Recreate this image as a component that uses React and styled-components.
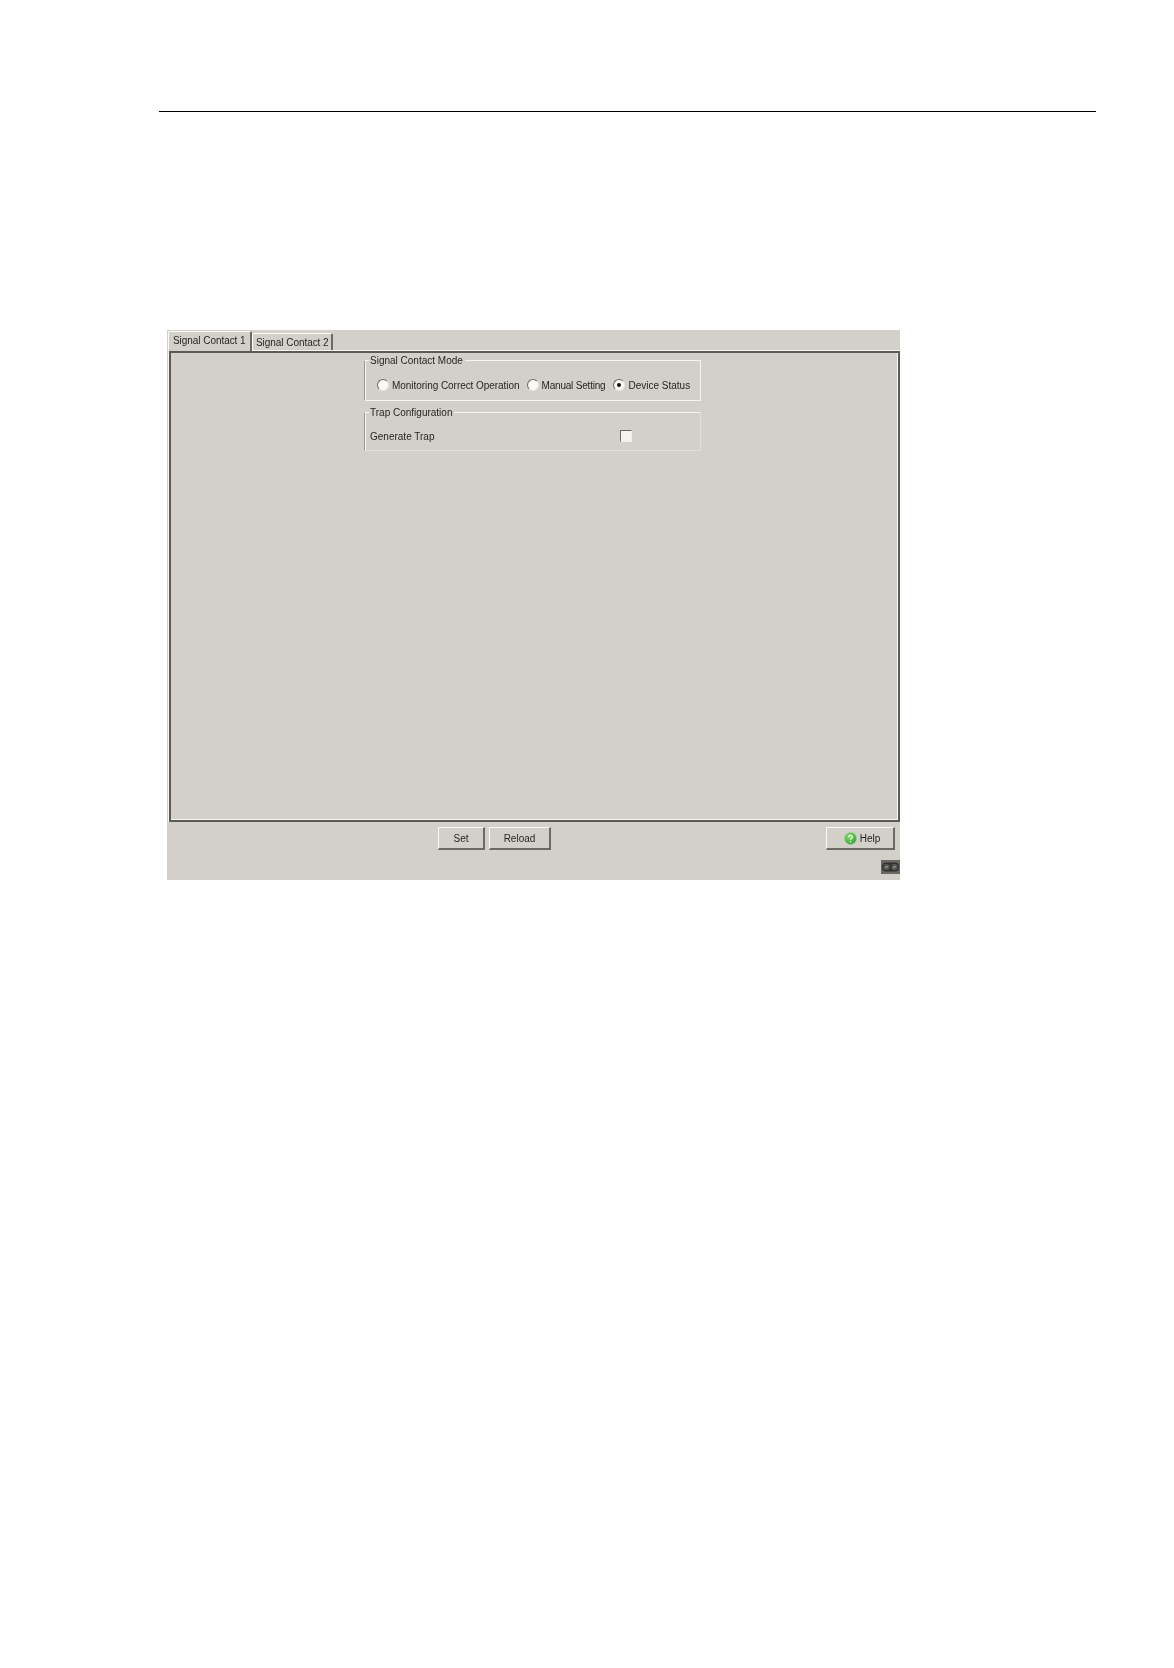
import React from "react";
import styled, { createGlobalStyle } from "styled-components";

const Global = createGlobalStyle`
  html, body { margin: 0; padding: 0; background: #fff; }
  body { font-family: "Liberation Sans", Arial, sans-serif; }
`;

const Page = styled.div`
  width: 1174px;
  height: 1668px;
  padding-top: 111px;
  box-sizing: border-box;
  overflow: hidden;
`;

const Rule = styled.div`
  height: 1px;
  margin: 0 78px 0 159px;
  background: #000;
`;

const Window = styled.div`
  margin: 218px 0 0 167px;
  width: 733px;
  height: 550px;
  background: #d3d0c9;
  display: flex;
  flex-direction: column;
  color: #262626;
  font-size: 10px;
  filter: blur(0.25px);
`;

const TabBar = styled.div`
  display: flex;
  align-items: flex-end;
  height: 21px;
  padding-left: 1px;
  flex: none;
`;

const Tab = styled.div`
  box-sizing: border-box;
  position: relative;
  z-index: 1;
  height: ${p => (p.$active ? 20 : 17)}px;
  width: ${p => (p.$active ? 84 : 81)}px;
  padding: 2px 0 0 ${p => (p.$active ? 4 : 3)}px;
  margin-bottom: ${p => (p.$active ? 0 : 1)}px;
  line-height: 13px;
  letter-spacing: -0.05px;
  white-space: nowrap;
  background: #d3d0c9;
  border-top: 1px solid #fbfbf8;
  border-left: 1px solid #fbfbf8;
  border-right: 2px solid #6b6963;
  border-radius: 2px 2px 0 0;
`;

const Frame = styled.div`
  flex: 1;
  margin: 0 0 0 2px;
  box-sizing: border-box;
  border: 2px solid #5b5a55;
  box-shadow: inset -1px -1px 0 #f7f7f3, -1px 0 0 #f7f7f3, 0 -1px 0 #f7f7f3;
  padding: 1px 0 0 193px;
  display: flex;
  flex-direction: column;
  gap: 5px;
`;

const Group = styled.fieldset`
  margin: 0;
  padding: 0;
  width: 337px;
  height: ${p => p.$h}px;
  box-sizing: border-box;
  border: 1px solid ${p => (p.$faint ? "#e2e0da" : "#f5f4f0")};
  border-top-color: #f5f4f0;
  border-left-color: #9a9892;
  border-radius: 2px 0 0 0;
  box-shadow: inset 1px 0 0 #f5f4f0;
`;

const Legend = styled.legend`
  padding: 0 2px 0 1px;
  margin-left: 4px;
  line-height: 13px;
  white-space: nowrap;
`;

const Radios = styled.div`
  display: flex;
  align-items: center;
  padding: 12px 0 0 12px;
`;

const RadioItem = styled.label`
  display: flex;
  align-items: center;
  gap: 3px;
  margin-right: ${p => p.$gap}px;
  white-space: nowrap;
`;

const RadioDot = styled.span`
  box-sizing: border-box;
  width: 12px;
  height: 12px;
  border-radius: 50%;
  background: #f8f8f4;
  border: 1px solid;
  border-color: #6a6862 #e8e6e0 #e8e6e0 #6a6862;
  display: flex;
  align-items: center;
  justify-content: center;
  flex: none;

  &::after {
    content: "";
    width: 4px;
    height: 4px;
    border-radius: 50%;
    background: ${p => (p.$on ? "#111" : "transparent")};
  }
`;

const RadioText = styled.span`
  letter-spacing: ${p => p.$track}px;
`;

const TrapRow = styled.div`
  display: flex;
  align-items: center;
  padding: 11px 0 0 5px;
`;

const TrapLabel = styled.span`
  width: 250px;
`;

const CheckBox = styled.span`
  box-sizing: border-box;
  width: 12px;
  height: 12px;
  background: #f5f4ef;
  border: 1px solid;
  border-color: #6a6862 #eeede8 #eeede8 #6a6862;
`;

const Footer = styled.div`
  flex: none;
  height: 58px;
  display: flex;
  flex-direction: column;
`;

const ButtonRow = styled.div`
  display: flex;
  gap: 4px;
  padding: 5px 5px 0 271px;
`;

const Button = styled.button`
  box-sizing: border-box;
  width: ${p => p.$w}px;
  height: 23px;
  margin-left: ${p => (p.$push ? "auto" : 0)};
  padding: 0 0 0 ${p => (p.$push ? 4 : 0)}px;
  font: inherit;
  color: #262626;
  background: #d3d0c9;
  border-style: solid;
  border-width: 1px 2px 2px 1px;
  border-color: #f7f7f3 #6b6963 #6b6963 #f7f7f3;
  display: flex;
  align-items: center;
  justify-content: center;
  gap: 3px;
`;

const GripRow = styled.div`
  display: flex;
  justify-content: flex-end;
  margin-top: 10px;
`;

const HelpIcon = () => (
  <svg width="13" height="13" viewBox="0 0 13 13">
    <defs>
      <radialGradient id="helpBall" cx="40%" cy="35%" r="70%">
        <stop offset="0%" stopColor="#8fdc6a" />
        <stop offset="100%" stopColor="#2f9e3a" />
      </radialGradient>
    </defs>
    <circle cx="6.5" cy="6.5" r="6" fill="url(#helpBall)" stroke="#9ad08e" strokeWidth="0.8" />
    <path d="M4.4 4.9c.2-1.2 1.2-1.7 2.2-1.6 1.1.1 1.9.8 1.8 1.8-.1 1.2-1.8 1.2-1.9 2.6" fill="none" stroke="#eef8e8" strokeWidth="1.3" />
    <circle cx="6.5" cy="9.8" r="0.8" fill="#eef8e8" />
  </svg>
);

const GripIcon = () => (
  <svg width="19" height="14" viewBox="0 0 19 14">
    <rect width="19" height="14" fill="#6a6964" />
    <rect x="1" y="2.5" width="17" height="9" rx="4" fill="#2f2f2f" />
    <circle cx="5.5" cy="7" r="3.3" fill="#555553" />
    <circle cx="13.5" cy="7" r="3.3" fill="#555553" />
    <path d="M4.5 8l2-2M12.5 8l2-2" stroke="#ddd" strokeWidth="0.9" />
  </svg>
);

export default function App() {
  return (
    <Page>
      <Global />
      <Rule />
      <Window>
        <TabBar>
          <Tab $active>Signal Contact 1</Tab>
          <Tab>Signal Contact 2</Tab>
        </TabBar>
        <Frame>
          <Group $h={47}>
            <Legend>Signal Contact Mode</Legend>
            <Radios>
              <RadioItem $gap={7}><RadioDot /><RadioText $track={-0.05}>Monitoring Correct Operation</RadioText></RadioItem>
              <RadioItem $gap={8}><RadioDot /><RadioText $track={-0.2}>Manual Setting</RadioText></RadioItem>
              <RadioItem $gap={0}><RadioDot $on /><RadioText $track={0}>Device Status</RadioText></RadioItem>
            </Radios>
          </Group>
          <Group $h={45} $faint>
            <Legend>Trap Configuration</Legend>
            <TrapRow>
              <TrapLabel>Generate Trap</TrapLabel>
              <CheckBox />
            </TrapRow>
          </Group>
        </Frame>
        <Footer>
          <ButtonRow>
            <Button $w={47}>Set</Button>
            <Button $w={62}>Reload</Button>
            <Button $w={69} $push><HelpIcon />Help</Button>
          </ButtonRow>
          <GripRow><GripIcon /></GripRow>
        </Footer>
      </Window>
    </Page>
  );
}
